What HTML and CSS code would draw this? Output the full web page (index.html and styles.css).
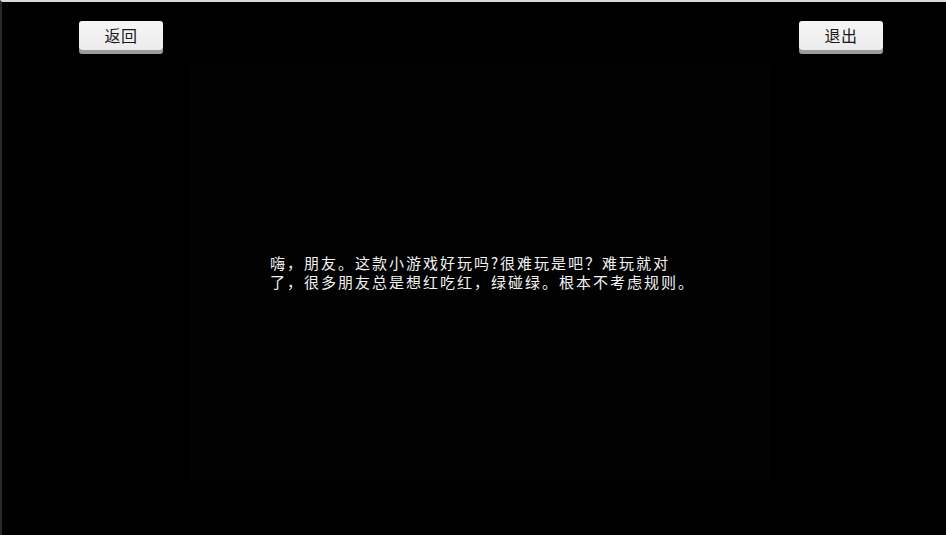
FILE: index.html
```html
<!DOCTYPE html>
<html lang="zh-CN">
<head>
<meta charset="utf-8">
<title>游戏</title>
<link rel="stylesheet" href="styles.css">
</head>
<body>
<div class="screen">
  <div class="topbar">
    <button class="btn">返回</button>
    <button class="btn">退出</button>
  </div>
  <div class="panel">
    <p class="msg">嗨，朋友。这款小游戏好玩吗?很难玩是吧？难玩就对</p>
    <p class="msg">了，很多朋友总是想红吃红，绿碰绿。根本不考虑规则。</p>
  </div>
</div>
</body>
</html>
```
FILE: styles.css
```css
html, body {
  margin: 0;
  padding: 0;
  background: #000;
}
.screen {
  width: 946px;
  height: 535px;
  box-sizing: border-box;
  border-top: 2px solid #d8d8d8;
  border-left: 2px solid #2a2a2a;
  background: #000;
  overflow: hidden;
  font-family: "Noto Sans CJK SC", "DejaVu Sans", sans-serif;
}
.topbar {
  display: flex;
  justify-content: space-between;
  padding: 19px 63px 0 77px;
}
.btn {
  width: 84px;
  height: 29px;
  margin: 0;
  padding: 0;
  border: none;
  border-radius: 3px;
  background: linear-gradient(#f6f6f6, #ececec);
  box-shadow: 0 4px 0 #9c9c9c;
  color: #1a1a1a;
  font-family: "Noto Sans CJK SC", sans-serif;
  font-size: 16px;
  line-height: 29px;
  letter-spacing: 0.5px;
}
.panel {
  margin: 15px 0 0 188px;
  width: 580px;
  height: 415px;
  box-sizing: border-box;
  background: #020202;
  padding: 188px 0 0 80px;
}
.msg {
  margin: 0;
  height: 19px;
  color: #f2f2f2;
  font-size: 15px;
  line-height: 19px;
  letter-spacing: 2px;
  white-space: nowrap;
}
```
